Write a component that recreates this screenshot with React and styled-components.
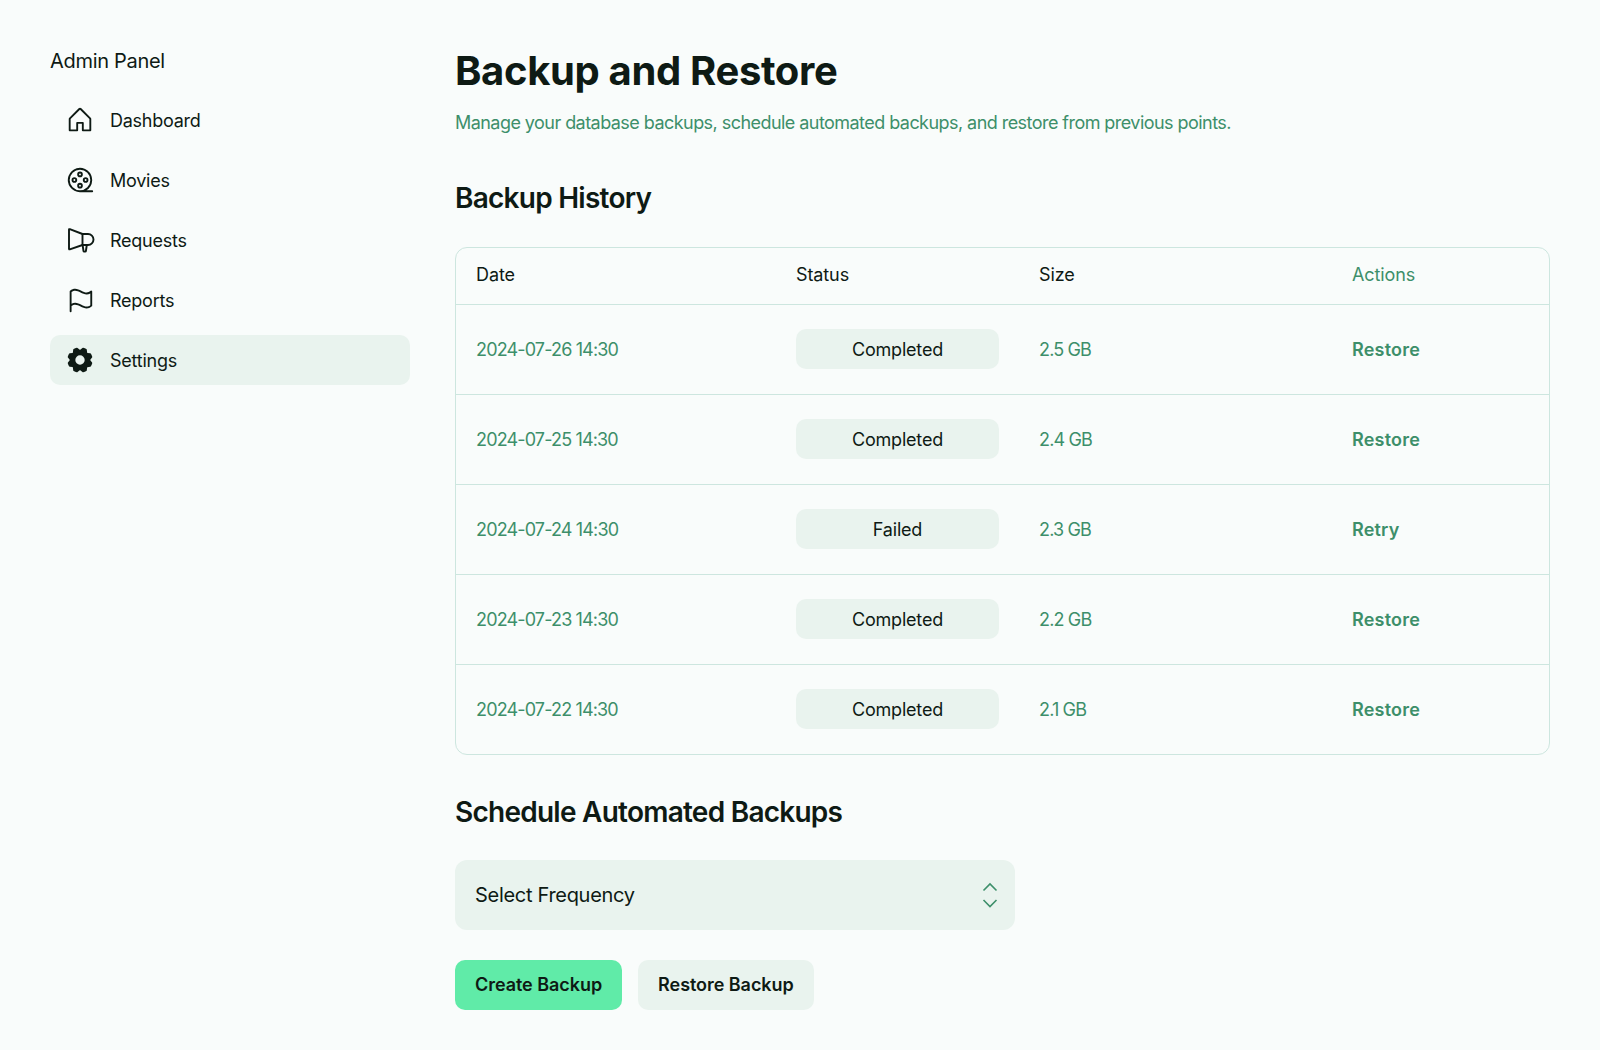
import React from "react"
import styled, { createGlobalStyle } from "styled-components"
import { PiHouse, PiFilmReel, PiFlag, PiGearFill } from "react-icons/pi"

const GlobalStyle = createGlobalStyle`
  html, body {
    margin: 0;
    padding: 0;
    background: #f9fcfb;
  }
  body {
    font-family: Inter, "Liberation Sans", sans-serif;
    color: #0e1a14;
  }
  * {
    box-sizing: border-box;
  }
`

const Page = styled.div`
  display: flex;
  gap: 45px;
  width: 1600px;
  height: 1050px;
  padding: 0 50px;
`

const Sidebar = styled.aside`
  width: 360px;
  flex: none;
  padding-top: 49px;
`

const Brand = styled.h2`
  margin: 0 0 22px;
  font-size: 20px;
  line-height: 24px;
  font-weight: 400;
  letter-spacing: -0.3px;
`

const Nav = styled.nav`
  display: flex;
  flex-direction: column;
  gap: 10px;
`

const NavItem = styled.a`
  display: flex;
  align-items: center;
  gap: 15px;
  height: 50px;
  padding-left: 15px;
  border-radius: 10px;
  font-size: 18px;
  letter-spacing: -0.25px;
  background: ${(p) => (p.$active ? "#e9f3ee" : "transparent")};

  svg {
    width: 30px;
    height: 30px;
    flex: none;
  }
`

const Main = styled.main`
  flex: 1;
  padding-top: 44px;
`

const Title = styled.h1`
  margin: 0;
  font-size: 40px;
  line-height: 54px;
  font-weight: 700;
  letter-spacing: -0.35px;
`

const Subtitle = styled.p`
  margin: 11px 0 0;
  font-size: 18px;
  line-height: 28px;
  color: #3d8f6a;
  letter-spacing: -0.55px;
`

const SectionTitle = styled.h3`
  margin: ${(p) => p.$top}px 0 0;
  font-size: 28px;
  line-height: 36px;
  font-weight: 600;
  letter-spacing: -0.75px;
`

const Table = styled.div`
  margin-top: 31px;
  border: 1px solid #cde6df;
  border-radius: 12px;
`

const Row = styled.div`
  display: grid;
  grid-template-columns: 320px 243px 313px 1fr;
  align-items: center;
  height: ${(p) => (p.$head ? 56 : 90)}px;
  padding: 0 0 ${(p) => (p.$head ? 3 : 1)}px 20px;
  font-size: 18px;
  letter-spacing: -0.1px;
  border-top: ${(p) => (p.$head ? "none" : "1px solid #cde6df")};
`

const Cell = styled.div`
  color: ${(p) => (p.$green ? "#3d8f6a" : "#0e1a14")};
  letter-spacing: ${(p) => (p.$tight ? "-0.85px" : "inherit")};
`

const Badge = styled.div`
  width: 203px;
  height: 40px;
  display: flex;
  align-items: center;
  justify-content: center;
  border-radius: 10px;
  background: #e9f3ee;
  letter-spacing: -0.2px;
`

const ActionLink = styled.a`
  color: #3d8f6a;
  font-weight: 600;
  letter-spacing: 0.2px;
`

const Select = styled.div`
  margin-top: 30px;
  width: 560px;
  height: 70px;
  display: flex;
  align-items: center;
  justify-content: space-between;
  padding: 0 15px 0 20px;
  border-radius: 12px;
  background: #e9f3ee;
  font-size: 20px;
  letter-spacing: -0.3px;
`

const Buttons = styled.div`
  display: flex;
  gap: 16px;
  margin-top: 30px;
`

const Button = styled.button`
  height: 50px;
  padding: 0 20px 2px;
  border: none;
  border-radius: 10px;
  font-family: inherit;
  font-size: 18px;
  font-weight: 600;
  letter-spacing: -0.05px;
  color: #0e1a14;
  background: ${(p) => (p.$primary ? "#60eba8" : "#e9f3ee")};
`

function Megaphone() {
  return (
    <svg viewBox="0 0 30 30" fill="none" stroke="currentColor" strokeWidth="1.9" strokeLinejoin="round" strokeLinecap="round">
      <path d="M4 4.7v19.1q0 .8.8.5L17.5 20H23a5.5 5.5 0 0 0 0-11h-5.5L4.8 4.2q-.8-.3-.8.5Z" />
      <path d="M17.5 9v11" />
      <path d="m17.6 20 .9 6q.1.6.7.6h1q.6 0 .7-.6l.9-6" />
    </svg>
  )
}

function Chevrons() {
  return (
    <svg width="20" height="30" viewBox="0 0 20 30" fill="none" stroke="#3d8f6a" strokeWidth="1.6">
      <path d="M3.5 10.5 10 4l6.5 6.5" />
      <path d="M3.5 20 10 26.5l6.5-6.5" />
    </svg>
  )
}

const navItems = [
  { label: "Dashboard", icon: PiHouse },
  { label: "Movies", icon: PiFilmReel },
  { label: "Requests", icon: Megaphone },
  { label: "Reports", icon: PiFlag },
  { label: "Settings", icon: PiGearFill, active: true },
]

const backups = [
  { date: "2024-07-26 14:30", status: "Completed", size: "2.5 GB", action: "Restore" },
  { date: "2024-07-25 14:30", status: "Completed", size: "2.4 GB", action: "Restore" },
  { date: "2024-07-24 14:30", status: "Failed", size: "2.3 GB", action: "Retry" },
  { date: "2024-07-23 14:30", status: "Completed", size: "2.2 GB", action: "Restore" },
  { date: "2024-07-22 14:30", status: "Completed", size: "2.1 GB", action: "Restore" },
]

export default function App() {
  return (
    <Page>
      <GlobalStyle />
      <Sidebar>
        <Brand>Admin Panel</Brand>
        <Nav>
          {navItems.map(({ label, icon: Icon, active }) => (
            <NavItem key={label} $active={active}>
              <Icon />
              {label}
            </NavItem>
          ))}
        </Nav>
      </Sidebar>
      <Main>
        <Title>Backup and Restore</Title>
        <Subtitle>Manage your database backups, schedule automated backups, and restore from previous points.</Subtitle>
        <SectionTitle $top={43}>Backup History</SectionTitle>
        <Table>
          <Row $head>
            <Cell>Date</Cell>
            <Cell>Status</Cell>
            <Cell>Size</Cell>
            <Cell $green>Actions</Cell>
          </Row>
          {backups.map((b) => (
            <Row key={b.date}>
              <Cell $green $tight>{b.date}</Cell>
              <Cell>
                <Badge>{b.status}</Badge>
              </Cell>
              <Cell $green $tight>{b.size}</Cell>
              <Cell>
                <ActionLink>{b.action}</ActionLink>
              </Cell>
            </Row>
          ))}
        </Table>
        <SectionTitle $top={39}>Schedule Automated Backups</SectionTitle>
        <Select>
          Select Frequency
          <Chevrons />
        </Select>
        <Buttons>
          <Button $primary>Create Backup</Button>
          <Button>Restore Backup</Button>
        </Buttons>
      </Main>
    </Page>
  )
}
